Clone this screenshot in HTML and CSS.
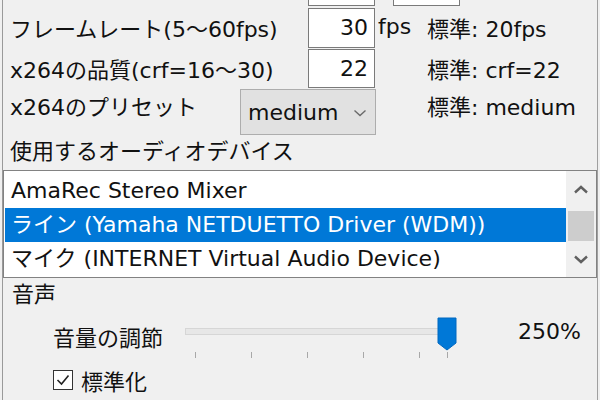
FILE: index.html
```html
<!DOCTYPE html>
<html lang="ja">
<head>
<meta charset="utf-8">
<link rel="stylesheet" href="styles.css">
</head>
<body>
<div class="window">
  <div class="row row0">
    <div class="label"></div>
    <div class="edit"></div>
    <div class="edit edit2"></div>
  </div>
  <div class="row row1">
    <div class="label">フレームレート(5～60fps)</div>
    <div class="edit">30</div>
    <div class="unit">fps</div>
    <div class="note">標準: 20fps</div>
  </div>
  <div class="row row2">
    <div class="label">x264の品質(crf=16～30)</div>
    <div class="edit">22</div>
    <div class="unit"></div>
    <div class="note">標準: crf=22</div>
  </div>
  <div class="row row3">
    <div class="label">x264のプリセット</div>
    <div class="select">
      <span>medium</span>
      <svg class="chev" width="14" height="8" viewBox="0 0 14 8"><polyline points="1.5,1.5 7,6.5 12.5,1.5" fill="none" stroke="#6a6a6a" stroke-width="1.4"/></svg>
    </div>
    <div class="note">標準: medium</div>
  </div>
  <div class="heading">使用するオーディオデバイス</div>
  <div class="listbox">
    <div class="items">
      <div class="item">AmaRec Stereo Mixer</div>
      <div class="item selected">ライン (Yamaha NETDUETTO Driver (WDM))</div>
      <div class="item">マイク (INTERNET Virtual Audio Device)</div>
    </div>
    <div class="scrollbar">
      <div class="arrow"><svg width="16" height="9" viewBox="0 0 16 9"><polyline points="2,7.5 8,2 14,7.5" fill="none" stroke="#606060" stroke-width="2.4"/></svg></div>
      <div class="track"><div class="thumb"></div></div>
      <div class="arrow"><svg width="16" height="9" viewBox="0 0 16 9"><polyline points="2,1.5 8,7 14,1.5" fill="none" stroke="#606060" stroke-width="2.4"/></svg></div>
    </div>
  </div>
  <div class="heading section">音声</div>
  <div class="volrow">
    <div class="vlabel">音量の調節</div>
    <div class="slider">
      <div class="strack"></div>
      <span class="tick" style="left:15px"></span>
      <span class="tick" style="left:71px"></span>
      <span class="tick" style="left:127px"></span>
      <span class="tick" style="left:183px"></span>
      <span class="tick" style="left:239px"></span>
      <span class="tick" style="left:267px"></span>
      <svg class="sthumb" width="20" height="34" viewBox="0 0 20 34"><path d="M1 1 H19 V26 L10 33 L1 26 Z" fill="#0078d7" stroke="#0068c0" stroke-width="1"/></svg>
    </div>
    <div class="pct">250%</div>
  </div>
  <div class="checkrow">
    <span class="checkbox"><svg width="18" height="18" viewBox="0 0 18 18"><polyline points="3.5,9 7.5,13 14.5,4.5" fill="none" stroke="#222" stroke-width="1.6"/></svg></span>
    <span>標準化</span>
  </div>
</div>
</body>
</html>
```

FILE: styles.css
```css
html, body {
  margin: 0;
  padding: 0;
  background: #f0f0f0;
  overflow: hidden;
}
body {
  width: 600px;
  height: 400px;
  font-family: "DejaVu Sans", "Noto Sans CJK JP", sans-serif;
  font-size: 22px;
  color: #111;
}
.window {
  display: flow-root;
  margin-left: 2px;
  width: 594px;
  height: 400px;
  border-left: 1px solid #9a9a9a;
  border-right: 1px solid #a0a0a0;
  background: #f0f0f0;
}
.row {
  display: grid;
  grid-template-columns: 298px 67px 52px 1fr;
  padding-left: 7px;
  align-items: center;
}
.label, .note, .unit, .heading, .item, .vlabel, .pct, .checkrow {
  white-space: nowrap;
}
.row0 {
  height: 40px;
  margin-top: -34px;
}
.row1 {
  height: 40px;
  margin-top: 2px;
}
.row1 .label, .row1 .note, .row1 .unit {
  padding-bottom: 3px;
}
.row2 {
  height: 39px;
  margin-top: 1px;
}
.row2 .label, .row2 .note {
  padding-bottom: 2px;
}
.edit {
  box-sizing: border-box;
  height: 100%;
  background: #fff;
  border: 1px solid #7a7a7a;
  text-align: right;
  padding-right: 6px;
  line-height: 37px;
}
.row0 .edit2 {
  width: 67px;
  margin-left: 18px;
  grid-column: 3;
}
.unit {
  padding-left: 3px;
}
.row3 {
  grid-template-columns: 230px 136px 51px 1fr;
  height: 46px;
  margin-top: 1px;
  align-items: start;
}
.row3 .label, .row3 .note {
  line-height: 38px;
}
.row3 .note {
  grid-column: 4;
}
.select {
  box-sizing: border-box;
  height: 46px;
  background: #e1e1e1;
  border: 1px solid #adadad;
  display: flex;
  align-items: center;
  justify-content: space-between;
  padding: 1px 8px 0 7px;
}
.chev {
  margin-top: 1px;
}
.heading {
  padding-left: 7px;
  line-height: 32px;
  height: 32px;
  margin-top: 1px;
}
.listbox {
  box-sizing: border-box;
  margin-top: 2px;
  height: 108px;
  border: 1px solid #828282;
  background: #fff;
  display: flex;
}
.items {
  flex: 1;
  padding: 3px 0 1px 1px;
}
.item {
  height: 34px;
  line-height: 34px;
  padding-left: 6px;
}
.item.selected {
  background: #0078d7;
  color: #fff;
}
.scrollbar {
  width: 30px;
  background: #f0f0f0;
  display: flex;
  flex-direction: column;
}
.arrow {
  height: 37px;
  display: flex;
  align-items: center;
  justify-content: center;
}
.track {
  flex: 1;
  display: flex;
  flex-direction: column;
  justify-content: center;
  padding: 0 2px;
}
.thumb {
  height: 30px;
  margin-top: 4px;
  background: #cdcdcd;
}
.section {
  margin-top: 0;
  padding-left: 9px;
  height: 34px;
  line-height: 34px;
}
.volrow {
  display: flex;
  align-items: flex-start;
  height: 48px;
}
.vlabel {
  margin-left: 50px;
  width: 127px;
  margin-top: 13px;
  line-height: 28px;
}
.slider {
  position: relative;
  width: 280px;
  height: 48px;
}
.strack {
  position: absolute;
  left: 5px;
  top: 16px;
  width: 256px;
  height: 5px;
  background: #e7e7e7;
  border: 1px solid #d6d6d6;
}
.tick {
  position: absolute;
  top: 40px;
  width: 1px;
  height: 6px;
  background: #a8a8a8;
}
.sthumb {
  position: absolute;
  left: 257px;
  top: 5px;
}
.pct {
  margin-left: 58px;
  margin-top: 6px;
  line-height: 28px;
}
.checkrow {
  display: flex;
  align-items: center;
  gap: 8px;
  height: 40px;
  padding-left: 50px;
}
.checkbox {
  box-sizing: border-box;
  width: 20px;
  height: 20px;
  border: 1px solid #333;
  background: #fff;
  display: flex;
  align-items: center;
  justify-content: center;
}
```
